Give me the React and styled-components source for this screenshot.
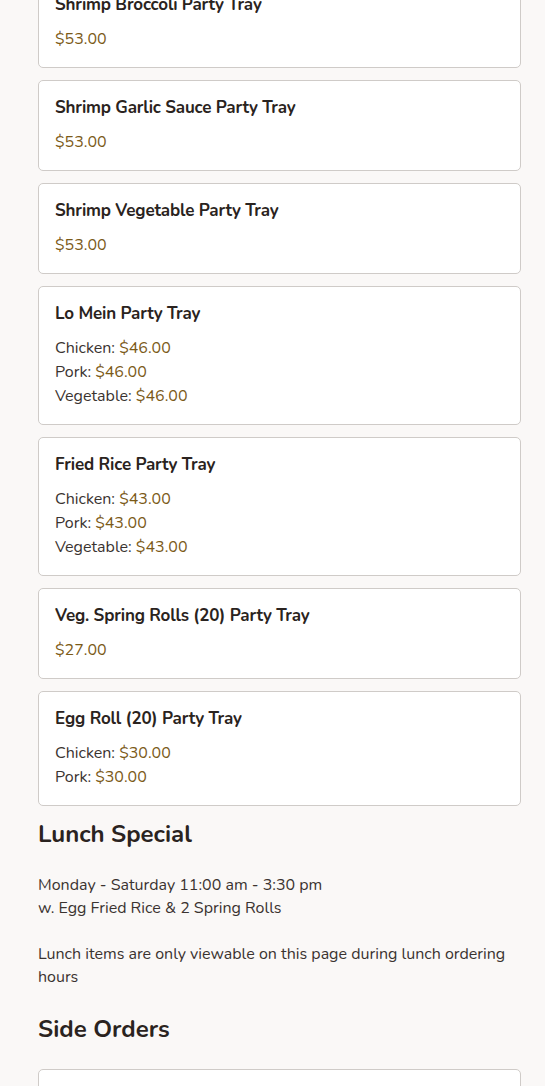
import React from "react";
import styled, { createGlobalStyle } from "styled-components";

const GlobalStyle = createGlobalStyle`
  html, body {
    margin: 0;
    padding: 0;
    background: #faf8f7;
  }
  body {
    font-family: "Nunito", "Lato", "Noto Sans", sans-serif;
    color: #2a2320;
  }
`;

const Page = styled.div`
  padding: 0 24px 0 38px;
  margin-top: -23px;
  width: 483px;
`;

const CardList = styled.div`
  display: flex;
  flex-direction: column;
  gap: 12px;
  margin-top: ${(p) => p.top || 0}px;
`;

const Card = styled.div`
  background: #fff;
  border: 1px solid #cfcbc8;
  border-radius: 5px;
  padding: 14px 16px 16px;
`;

const Title = styled.h3`
  margin: 0 0 10px;
  font-size: 17px;
  line-height: 25px;
  font-weight: 700;
  color: #2a2320;
  letter-spacing: -0.15px;
`;

const Line = styled.div`
  font-size: 16px;
  line-height: 24px;
  color: #3a3330;
`;

const Price = styled.span`
  color: #7b5a18;
`;

const SectionTitle = styled.h2`
  margin: ${(p) => p.top}px 0 0;
  font-size: 24px;
  line-height: 32px;
  font-weight: 700;
  color: #2a2320;
`;

const Para = styled.p`
  margin: ${(p) => p.top}px 0 0;
  font-size: 16px;
  line-height: 23px;
  color: #3a3330;
`;

const items = [
  { name: "Shrimp Broccoli Party Tray", prices: [[null, "$53.00"]] },
  { name: "Shrimp Garlic Sauce Party Tray", prices: [[null, "$53.00"]] },
  { name: "Shrimp Vegetable Party Tray", prices: [[null, "$53.00"]] },
  {
    name: "Lo Mein Party Tray",
    prices: [
      ["Chicken", "$46.00"],
      ["Pork", "$46.00"],
      ["Vegetable", "$46.00"],
    ],
  },
  {
    name: "Fried Rice Party Tray",
    prices: [
      ["Chicken", "$43.00"],
      ["Pork", "$43.00"],
      ["Vegetable", "$43.00"],
    ],
  },
  { name: "Veg. Spring Rolls (20) Party Tray", prices: [[null, "$27.00"]] },
  {
    name: "Egg Roll (20) Party Tray",
    prices: [
      ["Chicken", "$30.00"],
      ["Pork", "$30.00"],
    ],
  },
];

const MenuCard = ({ item }) => (
  <Card>
    <Title>{item.name}</Title>
    {item.prices.map(([label, price], i) => (
      <Line key={i}>
        {label && `${label}: `}
        <Price>{price}</Price>
      </Line>
    ))}
  </Card>
);

export default function App() {
  return (
    <>
      <GlobalStyle />
      <Page>
        <CardList>
          {items.map((item) => (
            <MenuCard key={item.name} item={item} />
          ))}
        </CardList>
        <SectionTitle top={12}>Lunch Special</SectionTitle>
        <Para top={24}>
          Monday - Saturday 11:00 am - 3:30 pm
          <br />
          w. Egg Fried Rice &amp; 2 Spring Rolls
        </Para>
        <Para top={23}>
          Lunch items are only viewable on this page during lunch ordering
          hours
        </Para>
        <SectionTitle top={24}>Side Orders</SectionTitle>
        <CardList top={24}>
          <Card>
            <Title>&nbsp;</Title>
          </Card>
        </CardList>
      </Page>
    </>
  );
}
